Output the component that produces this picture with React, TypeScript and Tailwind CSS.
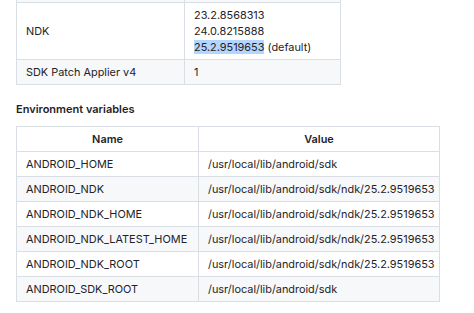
import React from "react";

const font = { fontFamily: 'Inter, "Liberation Sans", sans-serif' };

const envRows: [string, string][] = [
  ["ANDROID_HOME", "/usr/local/lib/android/sdk"],
  ["ANDROID_NDK", "/usr/local/lib/android/sdk/ndk/25.2.9519653"],
  ["ANDROID_NDK_HOME", "/usr/local/lib/android/sdk/ndk/25.2.9519653"],
  ["ANDROID_NDK_LATEST_HOME", "/usr/local/lib/android/sdk/ndk/25.2.9519653"],
  ["ANDROID_NDK_ROOT", "/usr/local/lib/android/sdk/ndk/25.2.9519653"],
  ["ANDROID_SDK_ROOT", "/usr/local/lib/android/sdk"],
];

export default function App() {
  const cell = "border border-[#d8dee4] px-[9px] py-[4px] align-middle";
  return (
    <div
      className="w-[474px] h-[313px] overflow-hidden bg-white text-[#1f2328] text-[10.9px] leading-[16px]"
      style={font}
    >
      <table className="ml-[16px] border-collapse w-[325px] table-fixed">
        <colgroup>
          <col className="w-[168px]" />
          <col />
        </colgroup>
        <tbody>
          <tr className="bg-[#f6f8fa] h-[2px]">
            <td className="border-x border-[#d8dee4] p-0 h-[2px] text-[0px] leading-none"></td>
            <td className="border-x border-[#d8dee4] p-0 h-[2px] text-[0px] leading-none"></td>
          </tr>
          <tr className="bg-white">
            <td className={cell}>NDK</td>
            <td className={cell}>
              <div>23.2.8568313</div>
              <div>24.0.8215888</div>
              <div>
                <span className="bg-[#b4d5fe]">25.2.9519653</span> (default)
              </div>
            </td>
          </tr>
          <tr className="bg-[#f6f8fa]">
            <td className={cell}>SDK Patch Applier v4</td>
            <td className={cell}>1</td>
          </tr>
        </tbody>
      </table>
      <h3 className="ml-[16px] mt-[16px] mb-[9px] font-semibold text-[11px] leading-[16px]">
        Environment variables
      </h3>
      <table className="ml-[16px] border-collapse w-[424px] table-fixed">
        <colgroup>
          <col className="w-[182px]" />
          <col />
        </colgroup>
        <thead>
          <tr className="bg-white">
            <th className={cell + " font-semibold text-center"}>Name</th>
            <th className={cell + " font-semibold text-center"}>Value</th>
          </tr>
        </thead>
        <tbody>
          {envRows.map(([n, v], i) => (
            <tr key={n} className={i % 2 === 1 ? "bg-[#f6f8fa]" : "bg-white"}>
              <td className={cell}>{n}</td>
              <td className={cell}>{v}</td>
            </tr>
          ))}
        </tbody>
      </table>
    </div>
  );
}
